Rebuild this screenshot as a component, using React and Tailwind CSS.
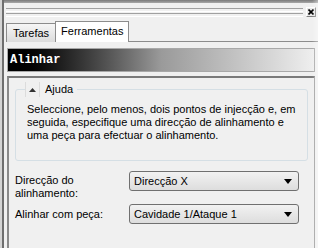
import React from "react";

const ui = { fontFamily: '"Liberation Sans", Arial, sans-serif' };

function Grip() {
  return (
    <div className="flex flex-col gap-[2px]">
      <div className="h-[1px] bg-[#a0a0a0]" />
      <div className="h-[1px] bg-white" />
    </div>
  );
}

function Select({ value }) {
  return (
    <div className="flex h-[20px] w-[170px] items-center justify-between rounded-[3px] border border-[#707070] bg-gradient-to-b from-[#f2f2f2] to-[#dddddd] pl-[4px] pr-[6px] text-[11px] text-black">
      <span>{value}</span>
      <svg width="8" height="5" viewBox="0 0 8 5">
        <path d="M0 0h8L4 5z" fill="#000" />
      </svg>
    </div>
  );
}

export default function App() {
  return (
    <div className="relative h-[248px] w-[328px] overflow-hidden bg-white" style={ui}>
      <div className="flex h-full">
        {/* left window edge */}
        <div className="w-[2px] bg-[#d4d4d4]" />
        <div className="w-[2px] bg-[#6e6e6e]" />
        <div className="flex w-[314px] flex-col bg-[#f0f0f0]">
          <div className="h-[3px] bg-gradient-to-b from-[#7a7a7a] to-[#a8a8a8]" />

          {/* grip row with close button */}
          <div className="flex h-[18px] items-center gap-[3px] pl-[2px] pr-[2px]">
            <div className="flex flex-1 flex-col gap-[1px]">
              <Grip />
              <Grip />
            </div>
            <div className="flex h-[10px] w-[10px] items-center justify-center border border-t-white border-l-white border-r-[#808080] border-b-[#808080] bg-[#e8e8e8]">
              <svg width="6" height="6" viewBox="0 0 6 6">
                <path d="M0.5 0.5L5.5 5.5M5.5 0.5L0.5 5.5" stroke="#000" strokeWidth="1.6" />
              </svg>
            </div>
          </div>

          {/* tabs */}
          <div className="flex h-[21px] items-end pl-[2px]">
            <div className="flex h-[19px] items-center border border-b-0 border-[#8c8c8c] bg-gradient-to-b from-[#f6f6f6] to-[#dcdcdc] px-[6px] text-[11px] text-black">
              Tarefas
            </div>
            <div className="-ml-[1px] flex h-[21px] items-center border border-b-0 border-[#8c8c8c] bg-white px-[5px] pb-[2px] text-[11px] text-black">
              Ferramentas
            </div>
            <div className="flex-1 border-b border-[#8c8c8c]" />
          </div>

          {/* header */}
          <div className="mt-[6px] ml-[3px] mr-[3px] flex h-[24px] items-center border border-[#a8a8a8] bg-gradient-to-r from-[#000000] via-[#9a9a9a] to-[#efefef] px-[2px]">
            <span
              className="text-[12px] font-bold text-white"
              style={{ fontFamily: '"Liberation Mono", "Courier New", monospace' }}
            >
              Alinhar
            </span>
          </div>

          {/* panel */}
          <div className="mt-[4px] ml-[3px] mr-[3px] flex flex-1 flex-col border-l-2 border-t-2 border-r border-l-[#8a8a8a] border-t-[#7a7a7a] border-r-[#a0a0a0] px-[6px] pt-[11px]">
            <div className="relative rounded-[3px] border border-[#d5dfe5] px-[11px] pt-[13px] pb-[18px] text-[11px] leading-[13px] text-black">
              <div className="absolute -top-[8px] left-[9px] flex h-[15px] items-center bg-[#f0f0f0] pr-[4px]">
                <div className="flex h-[15px] w-[15px] items-center justify-center border-x border-[#dcdcdc]">
                  <svg width="7" height="4" viewBox="0 0 7 4">
                    <path d="M0 4L3.5 0L7 4z" fill="#333" />
                  </svg>
                </div>
                <span className="ml-[5px]">Ajuda</span>
              </div>
              <div>Seleccione, pelo menos, dois pontos de injecção e, em</div>
              <div>seguida, especifique uma direcção de alinhamento e</div>
              <div>uma peça para efectuar o alinhamento.</div>
            </div>

            <div className="mt-[10px] flex text-[11px] leading-[13px] text-black">
              <div className="w-[114px] pt-[3px]">
                Direcção do
                <br />
                alinhamento:
              </div>
              <Select value="Direcção X" />
            </div>
            <div className="mt-[4px] flex items-center text-[11px] text-black">
              <div className="w-[114px]">Alinhar com peça:</div>
              <Select value="Cavidade 1/Ataque 1" />
            </div>
          </div>
        </div>
      </div>
      {/* right fade */}
      <div className="absolute right-0 top-0 h-full w-[16px] bg-gradient-to-r from-transparent to-white" />
    </div>
  );
}
